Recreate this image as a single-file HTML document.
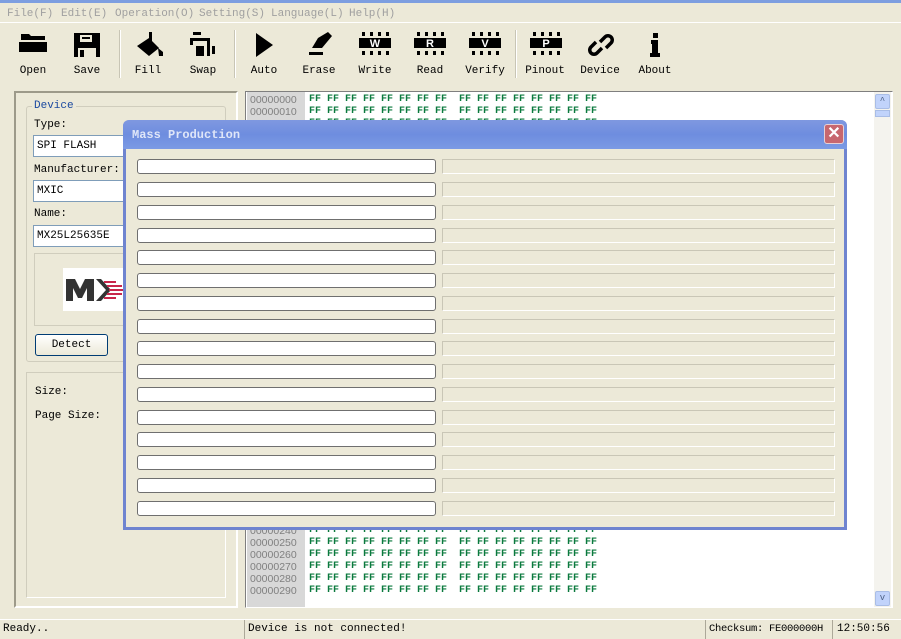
<!DOCTYPE html>
<html><head><meta charset="utf-8"><style>
*{margin:0;padding:0;box-sizing:border-box}
body{width:901px;height:638px;background:#ece9d8;position:relative;overflow:hidden;font-family:"Liberation Mono",monospace;font-size:11px;color:#000}
.a{position:absolute}
.menu span{position:absolute;top:8px;color:#a0a0a0;font-size:11px}
.tb{position:absolute;top:65px;font-size:11px;width:50px;text-align:center}
.sep{position:absolute;top:30px;width:2px;height:48px;border-left:1px solid #c8c5b5;border-right:1px solid #fff}
.field{position:absolute;left:33px;width:100px;height:22px;background:#fff;border:1px solid #7f9db9;padding:4px 3px;font-size:11px}
.hex{position:absolute;left:0;font-size:10px;line-height:12px;white-space:pre}
.hex .o{position:absolute;left:4px;color:#808080;font-family:"Liberation Sans",sans-serif;font-size:10.5px}
.hex .v{position:absolute;left:63px;color:#0b7a3e;font-weight:bold;font-family:"Liberation Mono",monospace}
.row{position:absolute;left:11px;width:299px;height:15px;background:#fff;border:1px solid #6f6f6f;border-radius:3px}
.row2{position:absolute;left:316px;width:393px;height:15px;border:1px solid #c9c6b6;border-right-color:#fff;border-bottom-color:#fff}
</style></head><body>
<div class="a" style="left:0;top:0;width:901px;height:3px;background:#7d9ee0"></div>
<div class="menu"><span style="left:7px">File(F)</span><span style="left:61px">Edit(E)</span><span style="left:115px">Operation(O)</span><span style="left:199px">Setting(S)</span><span style="left:271px">Language(L)</span><span style="left:349px">Help(H)</span></div>
<div class="a" style="left:0;top:22px;width:901px;height:1px;background:#fff"></div>

<svg class="a" style="left:0;top:28px" width="700" height="36">
<g fill="#000">
<path d="M21 6h8l2 2h14v4H21z M19 14h28v10H19z" />
<rect x="21" y="12" width="24" height="2" fill="#ece9d8"/>
<path d="M74 5h26v24H74z" /><rect x="80" y="7" width="12" height="7" fill="#ece9d8"/><rect x="82" y="9" width="8" height="2"/><rect x="78" y="20" width="18" height="9" fill="#ece9d8"/><rect x="80" y="22" width="4" height="7"/>
<path d="M149 4h3v10h-3z M137 18l12-8 10 10-10 8z M158 20l5 4v4h-4z"/>
<path d="M193 4h8v3h-8z M190 10h20v18h-3V13h-14v4h-3z M196 18h8v10h-8z M212 18h3v8h-3z"/>
<path d="M256 5l17 12-17 12z"/>
<path d="M318 10l10-6 4 4-10 12h-10z M309 24h14v3h-14z"/>
</g>
<g font-family="Liberation Sans,sans-serif" font-weight="bold" font-size="11" text-anchor="middle">
<g transform="translate(359,0)"><rect x="0" y="10" width="32" height="10"/><g><rect x="3" y="4" width="3" height="4"/><rect x="11" y="4" width="3" height="4"/><rect x="19" y="4" width="3" height="4"/><rect x="27" y="4" width="3" height="4"/><rect x="3" y="23" width="3" height="4"/><rect x="11" y="23" width="3" height="4"/><rect x="19" y="23" width="3" height="4"/><rect x="27" y="23" width="3" height="4"/></g><text x="16" y="19" fill="#fff">W</text></g>
<g transform="translate(414,0)"><rect x="0" y="10" width="32" height="10"/><g><rect x="3" y="4" width="3" height="4"/><rect x="11" y="4" width="3" height="4"/><rect x="19" y="4" width="3" height="4"/><rect x="27" y="4" width="3" height="4"/><rect x="3" y="23" width="3" height="4"/><rect x="11" y="23" width="3" height="4"/><rect x="19" y="23" width="3" height="4"/><rect x="27" y="23" width="3" height="4"/></g><text x="16" y="19" fill="#fff">R</text></g>
<g transform="translate(469,0)"><rect x="0" y="10" width="32" height="10"/><g><rect x="3" y="4" width="3" height="4"/><rect x="11" y="4" width="3" height="4"/><rect x="19" y="4" width="3" height="4"/><rect x="27" y="4" width="3" height="4"/><rect x="3" y="23" width="3" height="4"/><rect x="11" y="23" width="3" height="4"/><rect x="19" y="23" width="3" height="4"/><rect x="27" y="23" width="3" height="4"/></g><text x="16" y="19" fill="#fff">V</text></g>
<g transform="translate(530,0)"><rect x="0" y="10" width="32" height="10"/><g><rect x="3" y="4" width="3" height="4"/><rect x="11" y="4" width="3" height="4"/><rect x="19" y="4" width="3" height="4"/><rect x="27" y="4" width="3" height="4"/><rect x="3" y="23" width="3" height="4"/><rect x="11" y="23" width="3" height="4"/><rect x="19" y="23" width="3" height="4"/><rect x="27" y="23" width="3" height="4"/></g><text x="16" y="19" fill="#fff">P</text></g>
</g>
<path d="M600 14l5-5a4 4 0 0 1 6 6l-5 5 M602 20l-5 5a4 4 0 0 1-6-6l5-5" stroke="#000" stroke-width="3.5" fill="none"/>
<rect x="653" y="5" width="5" height="5"/><path d="M651 12h7v13h2v4h-10v-4h2v-9h-1z"/>
</svg>
<div class="sep" style="left:119px"></div><div class="sep" style="left:234px"></div><div class="sep" style="left:515px"></div>
<div class="tb" style="left:8px">Open</div><div class="tb" style="left:62px">Save</div><div class="tb" style="left:123px">Fill</div><div class="tb" style="left:178px">Swap</div><div class="tb" style="left:239px">Auto</div><div class="tb" style="left:294px">Erase</div><div class="tb" style="left:350px">Write</div><div class="tb" style="left:405px">Read</div><div class="tb" style="left:460px">Verify</div><div class="tb" style="left:520px">Pinout</div><div class="tb" style="left:575px">Device</div><div class="tb" style="left:630px">About</div>

<div class="a" style="left:14px;top:91px;width:224px;height:517px;border:2px solid #9d9a8a;border-right-color:#fff;border-bottom-color:#fff"></div>
<div class="a" style="left:26px;top:106px;width:200px;height:256px;border:1px solid #d0cdbd;border-radius:3px"></div>
<div class="a" style="left:32px;top:100px;background:#ece9d8;color:#1c4aa0;padding:0 2px">Device</div>
<div class="a" style="left:34px;top:119px">Type:</div>
<div class="field" style="top:135px">SPI FLASH</div>
<div class="a" style="left:34px;top:164px">Manufacturer:</div>
<div class="field" style="top:180px">MXIC</div>
<div class="a" style="left:34px;top:208px">Name:</div>
<div class="field" style="top:225px">MX25L25635E</div>
<div class="a" style="left:34px;top:253px;width:100px;height:73px;border:1px solid #d0cdbd;border-right:none"></div>
<div class="a" style="left:63px;top:268px;width:60px;height:43px;background:#fff"><svg width="60" height="43"><path d="M3 11h9l5 10 5-10h9v22h-7V20l-5 10h-4l-5-10v13H3z" fill="#333"/><path d="M33 11h5l10 11-10 11h-5l10-11z" fill="#333"/><g stroke="#c8264a" stroke-width="2"><path d="M41 14h12M44 18h15M46 22h14M44 26h15M41 30h12"/></g></svg></div>
<div class="a" style="left:35px;top:334px;width:73px;height:22px;border:1px solid #003c74;border-radius:3px;background:linear-gradient(#fff,#ece9d8);text-align:center;line-height:20px">Detect</div>
<div class="a" style="left:26px;top:372px;width:200px;height:226px;border:1px solid #d0cdbd;border-right-color:#fff;border-bottom-color:#fff"></div>
<div class="a" style="left:35px;top:386px">Size:</div>
<div class="a" style="left:35px;top:410px">Page Size:</div>

<div class="a" style="left:245px;top:91px;width:648px;height:517px;border:1px solid #7f7f7f;border-right-color:#fff;border-bottom-color:#fff;background:#fff;overflow:hidden">
<div class="a" style="left:1px;top:0;width:58px;height:517px;background:#d8d8d8"></div>
<div class="hex" style="top:2px"><span class="o">00000000</span><span class="v">FF FF FF FF FF FF FF FF  FF FF FF FF FF FF FF FF</span></div>
<div class="hex" style="top:14px"><span class="o">00000010</span><span class="v">FF FF FF FF FF FF FF FF  FF FF FF FF FF FF FF FF</span></div>
<div class="hex" style="top:26px"><span class="o">00000020</span><span class="v">FF FF FF FF FF FF FF FF  FF FF FF FF FF FF FF FF</span></div>
<div class="hex" style="top:433px"><span class="o">00000240</span><span class="v">FF FF FF FF FF FF FF FF  FF FF FF FF FF FF FF FF</span></div>
<div class="hex" style="top:445px"><span class="o">00000250</span><span class="v">FF FF FF FF FF FF FF FF  FF FF FF FF FF FF FF FF</span></div>
<div class="hex" style="top:457px"><span class="o">00000260</span><span class="v">FF FF FF FF FF FF FF FF  FF FF FF FF FF FF FF FF</span></div>
<div class="hex" style="top:469px"><span class="o">00000270</span><span class="v">FF FF FF FF FF FF FF FF  FF FF FF FF FF FF FF FF</span></div>
<div class="hex" style="top:481px"><span class="o">00000280</span><span class="v">FF FF FF FF FF FF FF FF  FF FF FF FF FF FF FF FF</span></div>
<div class="hex" style="top:493px"><span class="o">00000290</span><span class="v">FF FF FF FF FF FF FF FF  FF FF FF FF FF FF FF FF</span></div>
<div class="a" style="left:628px;top:0;width:17px;height:516px;background:#f4f3ee"></div>
<div class="a" style="left:629px;top:2px;width:15px;height:15px;background:#c1d3fb;border:1px solid #a9bde6;border-radius:2px;font-size:9px;text-align:center;line-height:12px;color:#4d6185">^</div>
<div class="a" style="left:629px;top:18px;width:15px;height:7px;background:#c1d3fb;border:1px solid #a9bde6"></div>
<div class="a" style="left:629px;top:499px;width:15px;height:15px;background:#c1d3fb;border:1px solid #a9bde6;border-radius:2px;font-size:9px;text-align:center;line-height:12px;color:#4d6185">v</div>
</div>

<div class="a" style="left:0;top:619px;width:901px;height:19px;border-top:1px solid #fff;font-size:11px">
<div class="a" style="left:3px;top:3px">Ready..</div>
<div class="a" style="left:244px;top:0;width:1px;height:19px;background:#aca899"></div>
<div class="a" style="left:248px;top:3px">Device is not connected!</div>
<div class="a" style="left:705px;top:0;width:1px;height:19px;background:#aca899"></div>
<div class="a" style="left:709px;top:3px;font-size:10.5px;letter-spacing:-0.3px">Checksum: FE000000H</div>
<div class="a" style="left:832px;top:0;width:1px;height:19px;background:#aca899"></div>
<div class="a" style="left:837px;top:3px">12:50:56</div>
</div>

<div class="a" style="left:123px;top:120px;width:724px;height:410px;background:#ece9d8;border:3px solid #6f84d0;border-top:none;border-radius:6px 6px 0 0">
<div class="a" style="left:-3px;top:0;width:724px;height:29px;background:linear-gradient(#7f98e0,#6e8ddf 50%,#7b9ae4);border-radius:6px 6px 0 0"></div>
<div class="a" style="left:6px;top:8px;color:#dfe6f8;font-weight:bold;font-size:12px">Mass Production</div>
<div class="a" style="left:698px;top:4px;width:20px;height:20px;background:#c7676f;border:1px solid #e8d0d4;border-radius:3px;color:#fff;text-align:center;line-height:18px;font-family:'Liberation Sans',sans-serif;font-size:16px;font-weight:bold">✕</div>
<div class="row" style="top:39px"></div><div class="row2" style="top:39px"></div>
<div class="row" style="top:62px"></div><div class="row2" style="top:62px"></div>
<div class="row" style="top:85px"></div><div class="row2" style="top:85px"></div>
<div class="row" style="top:108px"></div><div class="row2" style="top:108px"></div>
<div class="row" style="top:130px"></div><div class="row2" style="top:130px"></div>
<div class="row" style="top:153px"></div><div class="row2" style="top:153px"></div>
<div class="row" style="top:176px"></div><div class="row2" style="top:176px"></div>
<div class="row" style="top:199px"></div><div class="row2" style="top:199px"></div>
<div class="row" style="top:221px"></div><div class="row2" style="top:221px"></div>
<div class="row" style="top:244px"></div><div class="row2" style="top:244px"></div>
<div class="row" style="top:267px"></div><div class="row2" style="top:267px"></div>
<div class="row" style="top:290px"></div><div class="row2" style="top:290px"></div>
<div class="row" style="top:312px"></div><div class="row2" style="top:312px"></div>
<div class="row" style="top:335px"></div><div class="row2" style="top:335px"></div>
<div class="row" style="top:358px"></div><div class="row2" style="top:358px"></div>
<div class="row" style="top:381px"></div><div class="row2" style="top:381px"></div>
</div>
</body></html>
